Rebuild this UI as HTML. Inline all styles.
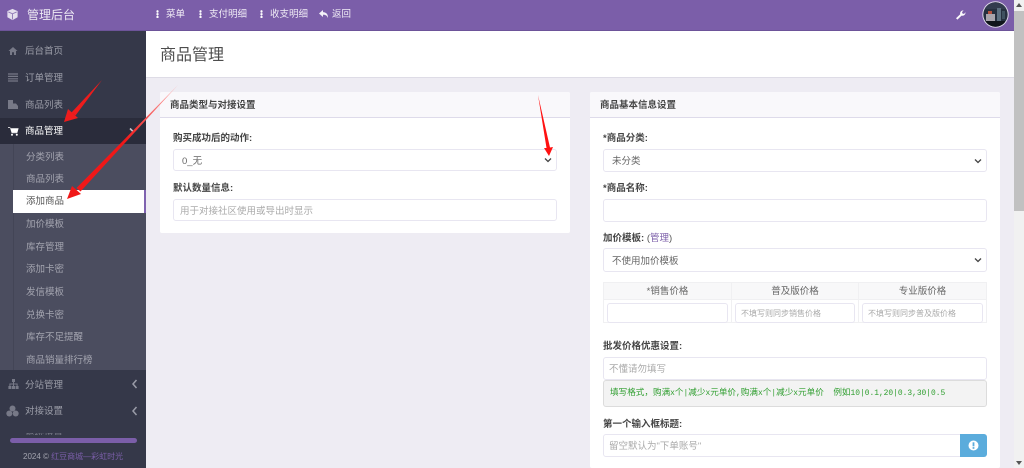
<!DOCTYPE html>
<html lang="zh"><head><meta charset="utf-8"><title>商品管理</title>
<style>
*{box-sizing:border-box}
html,body{margin:0;padding:0;width:1024px;height:468px;overflow:hidden;background:#eeecf3;font-family:"Liberation Sans","Noto Sans CJK SC",sans-serif;color:#444}
.a{position:absolute;white-space:nowrap}
#root{position:absolute;left:0;top:0;width:1024px;height:468px;overflow:hidden;filter:blur(.35px)}
.top{left:0;top:0;width:1014px;height:31px;background:#7b5ea9;border-bottom:1px solid #6d5499}
.nav{top:8px;font-size:9.5px;line-height:14px;color:#f1edf6}
.dots{top:10px;width:3px;height:8px;background:radial-gradient(circle,#fff 1.1px,transparent 1.3px) 0 0/3px 2.8px}
.side{left:0;top:31px;width:146px;height:437px;background:#353849}
.m{left:25px;font-size:9.5px;line-height:14px;color:#9b9da8}
.sub{left:26px;font-size:9.5px;line-height:14px;color:#a3a4af}
.panel{background:#fff;border-radius:2px}
.ph{left:0;top:0;right:0;height:26px;background:#f9f8fb;border-bottom:1px solid #dedbea;font-size:9.5px;font-weight:700;line-height:27px;padding-left:10px;color:#444;border-radius:2px 2px 0 0}
.lb{font-size:9.5px;line-height:14px;font-weight:700;color:#444}
.in{background:#fff;border:1px solid #e8e6f1;border-radius:3px;font-size:9.5px;color:#666;padding-left:8px;white-space:nowrap}
.ph2{color:#aaa}
.ch{position:absolute;right:4px;top:50%;margin-top:-3px}
.hint span{font-family:"Liberation Mono",monospace;font-size:7.9px}
</style></head><body>
<div id="root">
<div class="a top"></div>
<svg class="a" style="left:6px;top:8px" width="13" height="13" viewBox="0 0 14 14"><path d="M7 1 12.5 3.4V10L7 13 1.5 10V3.4Z" fill="#e4deee"/><path d="M2.5 4.2 7 6.2 11.5 4.2M7 6.2V12.4" stroke="#8f78b6" stroke-width="1" fill="none"/></svg>
<div class="a" style="left:27px;top:7px;font-size:12px;line-height:16px;color:#ece8f3">管理后台</div>
<div class="a dots" style="left:156px"></div><div class="a nav" style="left:166px">菜单</div>
<div class="a dots" style="left:199px"></div><div class="a nav" style="left:209px">支付明细</div>
<div class="a dots" style="left:260px"></div><div class="a nav" style="left:270px">收支明细</div>
<svg class="a" style="left:318px;top:9px" width="11" height="11" viewBox="0 0 11 11"><path d="M5 1 1 4.5 5 8V5.8C7.5 5.6 9 6.6 10 9 10.2 5.5 8.4 3.2 5 3.1Z" fill="#f4f1f8"/></svg>
<div class="a nav" style="left:332px">返回</div>
<svg class="a" style="left:955px;top:9px" width="11" height="11" viewBox="0 0 11 11"><path d="M1 9.3 5.2 5.2C4.7 3.4 6.2 1.2 8.6 1.4L7 3.1 7.6 4.6 9.1 4.9 10.4 3.3C10.8 5.8 8.5 7.2 6.6 6.6L2.4 10.6Z" fill="#fbfafc"/></svg>
<svg class="a" style="left:982px;top:1px" width="27" height="27" viewBox="0 0 27 27"><defs><clipPath id="c"><circle cx="13.5" cy="13.5" r="12.2"/></clipPath></defs><circle cx="13.5" cy="13.5" r="13.2" fill="#dcd6e8"/><g clip-path="url(#c)"><rect width="27" height="27" fill="#26303f"/><rect x="0" y="0" width="27" height="8" fill="#323c4e"/><rect x="4" y="13" width="9" height="7" fill="#a9a5ac"/><rect x="6" y="10" width="4" height="3" fill="#b5533f"/><rect x="15" y="7" width="4" height="13" fill="#5d7080"/><rect x="20" y="10" width="3" height="8" fill="#3f5160"/><rect x="3" y="20" width="20" height="7" fill="#10151b"/></g></svg>

<div class="a side"></div>
<div class="a" style="left:0;top:118px;width:146px;height:26px;background:#2a2c3b"></div>
<div class="a" style="left:0;top:144px;width:146px;height:226px;background:#4b4d5f"></div>
<div class="a" style="left:13px;top:144px;width:1px;height:226px;background:#434556"></div>
<div class="a" style="left:13px;top:190px;width:133px;height:23px;background:#fff"></div>
<div class="a" style="left:144px;top:190px;width:2px;height:23px;background:#7f63b0"></div>

<svg class="a" style="left:8px;top:46px" width="10" height="10" viewBox="0 0 10 10"><path d="M5 1 .5 5H2V9H4V6.3H6V9H8V5H9.5Z" fill="#777987"/></svg>
<div class="a m" style="top:45px">后台首页</div>
<svg class="a" style="left:8px;top:73px" width="10" height="9" viewBox="0 0 10 9"><path d="M0 1H10M0 3.4H10M0 5.8H10M0 8H10" stroke="#777987" stroke-width="1.2"/></svg>
<div class="a m" style="top:72px">订单管理</div>
<svg class="a" style="left:8px;top:100px" width="10" height="9" viewBox="0 0 10 9"><path d="M0 0H5V3.5H8L10 6V9H0Z" fill="#777987"/></svg>
<div class="a m" style="top:99px">商品列表</div>
<svg class="a" style="left:8px;top:126px" width="11" height="10" viewBox="0 0 11 10"><path d="M0 1H2L2.6 2.2H10.6L9.5 6.2H3.4L2 1.8H0Z" fill="#fff"/><path d="M3.5 6.2H9.4V7.2H3.5Z" fill="#fff"/><circle cx="4" cy="8.8" r="1" fill="#fff"/><circle cx="8.8" cy="8.8" r="1" fill="#fff"/></svg>
<div class="a m" style="top:125px;color:#fff">商品管理</div>
<svg class="a" style="left:129px;top:127px" width="9" height="7" viewBox="0 0 9 7"><path d="M1 1.5 4.5 5 8 1.5" stroke="#c8c8cf" stroke-width="1.6" fill="none"/></svg>

<div class="a sub" style="top:151px">分类列表</div>
<div class="a sub" style="top:173px">商品列表</div>
<div class="a sub" style="top:195px;color:#555">添加商品</div>
<div class="a sub" style="top:218px">加价模板</div>
<div class="a sub" style="top:241px">库存管理</div>
<div class="a sub" style="top:263px">添加卡密</div>
<div class="a sub" style="top:286px">发信模板</div>
<div class="a sub" style="top:309px">兑换卡密</div>
<div class="a sub" style="top:331px">库存不足提醒</div>
<div class="a sub" style="top:354px">商品销量排行榜</div>

<svg class="a" style="left:8px;top:379px" width="11" height="10" viewBox="0 0 11 10"><path d="M4 0H7V3H6V4.5H9.6V7H10.6V10H7.6V7H8.6V5.5H6V7H7V10H4V7H5V5.5H2.4V7H3.4V10H.4V7H1.4V4.5H5V3H4Z" fill="#777987"/></svg>
<div class="a m" style="top:379px">分站管理</div>
<svg class="a" style="left:131px;top:379px" width="7" height="10" viewBox="0 0 7 10"><path d="M5.5 1 2 5 5.5 9" stroke="#9a9ca8" stroke-width="1.5" fill="none"/></svg>
<svg class="a" style="left:6px;top:405px" width="13" height="12" viewBox="0 0 13 12"><circle cx="6.5" cy="3.5" r="3" fill="#777987"/><circle cx="3.3" cy="8.5" r="3" fill="#777987"/><circle cx="9.7" cy="8.5" r="3" fill="#777987"/></svg>
<div class="a m" style="top:405px">对接设置</div>
<svg class="a" style="left:131px;top:406px" width="7" height="10" viewBox="0 0 7 10"><path d="M5.5 1 2 5 5.5 9" stroke="#9a9ca8" stroke-width="1.5" fill="none"/></svg>
<div class="a" style="left:25px;top:433px;width:38px;height:2px;overflow:hidden;font-size:9.5px;line-height:4px;color:#777987">系统设置</div>
<div class="a" style="left:10px;top:438px;width:127px;height:5px;border-radius:3px;background:#7b5ea9"></div>
<div class="a" style="left:23px;top:451px;font-size:8px;line-height:12px;color:#a3a4af">2024 © <span style="color:#7b5ea9">红豆商城—彩虹时光</span></div>

<div class="a" style="left:146px;top:31px;width:868px;height:47px;background:#fff;border-bottom:1px solid #dedce6"></div>
<div class="a" style="left:160px;top:45px;font-size:16px;line-height:22px;color:#4d4d4d">商品管理</div>

<div class="a panel" style="left:160px;top:92px;width:410px;height:141px">
<div class="a ph">商品类型与对接设置</div>
<div class="a lb" style="left:13px;top:40px">购买成功后的动作:</div>
<div class="a in" style="left:13px;top:57px;width:384px;height:22px;line-height:23px">0_无<svg class="ch" width="8" height="6" viewBox="0 0 8 6"><path d="M1 1.5 4 4.5 7 1.5" stroke="#444" stroke-width="1.3" fill="none"/></svg></div>
<div class="a lb" style="left:13px;top:90px">默认数量信息:</div>
<div class="a in ph2" style="left:13px;top:107px;width:384px;height:22px;line-height:23px;padding-left:6px">用于对接社区使用或导出时显示</div>
</div>

<div class="a panel" style="left:590px;top:92px;width:410px;height:376px">
<div class="a ph">商品基本信息设置</div>
<div class="a lb" style="left:13px;top:40px">*商品分类:</div>
<div class="a in" style="left:13px;top:57px;width:384px;height:23px;line-height:24px">未分类<svg class="ch" width="8" height="6" viewBox="0 0 8 6"><path d="M1 1.5 4 4.5 7 1.5" stroke="#444" stroke-width="1.3" fill="none"/></svg></div>
<div class="a lb" style="left:13px;top:90px">*商品名称:</div>
<div class="a in" style="left:13px;top:107px;width:384px;height:23px"></div>
<div class="a lb" style="left:13px;top:140px">加价模板: <span style="font-weight:400;color:#555">(<span style="color:#7b5ea9">管理</span>)</span></div>
<div class="a in" style="left:13px;top:156px;width:384px;height:24px;line-height:25px">不使用加价模板<svg class="ch" width="8" height="6" viewBox="0 0 8 6"><path d="M1 1.5 4 4.5 7 1.5" stroke="#444" stroke-width="1.3" fill="none"/></svg></div>

<div class="a" style="left:13px;top:190px;width:384px;height:41px;border:1px solid #f0f0f2"></div>
<div class="a" style="left:14px;top:191px;width:382px;height:17px;background:#f8f8f9;border-bottom:1px solid #f0f0f2"></div>
<div class="a" style="left:141px;top:190px;width:1px;height:41px;background:#f0f0f2"></div>
<div class="a" style="left:268px;top:190px;width:1px;height:41px;background:#f0f0f2"></div>
<div class="a" style="left:14px;top:193px;width:127px;text-align:center;font-size:9.5px;line-height:14px;color:#666">*销售价格</div>
<div class="a" style="left:142px;top:193px;width:126px;text-align:center;font-size:9.5px;line-height:14px;color:#666">普及版价格</div>
<div class="a" style="left:269px;top:193px;width:127px;text-align:center;font-size:9.5px;line-height:14px;color:#666">专业版价格</div>
<div class="a in" style="left:17px;top:211px;width:121px;height:20px"></div>
<div class="a in ph2" style="left:145px;top:211px;width:120px;height:20px;font-size:8px;line-height:19px;padding-left:5px">不填写则同步销售价格</div>
<div class="a in ph2" style="left:272px;top:211px;width:121px;height:20px;font-size:8px;line-height:19px;padding-left:5px">不填写则同步普及版价格</div>

<div class="a lb" style="left:13px;top:248px">批发价格优惠设置:</div>
<div class="a in ph2" style="left:13px;top:265px;width:384px;height:23px;line-height:23px;padding-left:5px">不懂请勿填写</div>
<div class="a hint" style="left:13px;top:288px;width:384px;height:27px;background:#f3f3f3;border:1px solid #dcdcdc;border-radius:3px;font-family:'Liberation Mono','Noto Sans CJK SC',monospace;font-size:8.6px;line-height:25px;padding-left:6px;color:#2f9e2f">填写格式，购满<span>x</span>个<span>|</span>减少<span>x</span>元单价<span>,</span>购满<span>x</span>个<span>|</span>减少<span>x</span>元单价<span>&nbsp;&nbsp;</span>例如<span>10|0.1,20|0.3,30|0.5</span></div>
<div class="a lb" style="left:13px;top:326px">第一个输入框标题:</div>
<div class="a in ph2" style="left:13px;top:342px;width:358px;height:23px;line-height:23px;padding-left:5px;border-radius:3px 0 0 3px">留空默认为"下单账号"</div>
<div class="a" style="left:370px;top:342px;width:27px;height:23px;background:#5bacdc;border-radius:0 3px 3px 0"></div>
<svg class="a" style="left:378px;top:348px" width="11" height="11" viewBox="0 0 11 11"><circle cx="5.5" cy="5.5" r="5" fill="#fff"/><rect x="4.6" y="2.3" width="1.8" height="4" fill="#5bacdc"/><rect x="4.6" y="7.1" width="1.8" height="1.7" fill="#5bacdc"/></svg>
</div>

<div class="a" style="left:1014px;top:0;width:10px;height:468px;background:#f1f1f1"></div>
<div class="a" style="left:1014px;top:11px;width:10px;height:200px;background:#c1c1c1"></div>
<svg class="a" style="left:1016px;top:3px" width="6" height="4"><path d="M3 0 6 4H0Z" fill="#555"/></svg>
<svg class="a" style="left:1016px;top:461px" width="6" height="4"><path d="M0 0H6L3 4Z" fill="#555"/></svg>

<svg class="a" style="left:0;top:0" width="1024" height="468" viewBox="0 0 1024 468">
<defs><linearGradient id="g2" gradientUnits="userSpaceOnUse" x1="178" y1="85" x2="125" y2="140"><stop offset="0" stop-color="#ffb0b0"/><stop offset="1" stop-color="#f01818"/></linearGradient></defs>
<path d="M102 80 75.500 115.500 71.500 112.500Z" fill="#ee1c1c"/>
<path d="M64 122 68 109 78 118Z" fill="#ee1c1c"/>
<path d="M178 85 80.500 191.500 76.500 188Z" fill="url(#g2)"/>
<path d="M67 199 72 186 81 194Z" fill="#f01818"/>
<path d="M538 95 546.500 148 544 148 549 156 553 147 550 147.500Z" fill="#f11"/>
</svg>
</div>
</body></html>
